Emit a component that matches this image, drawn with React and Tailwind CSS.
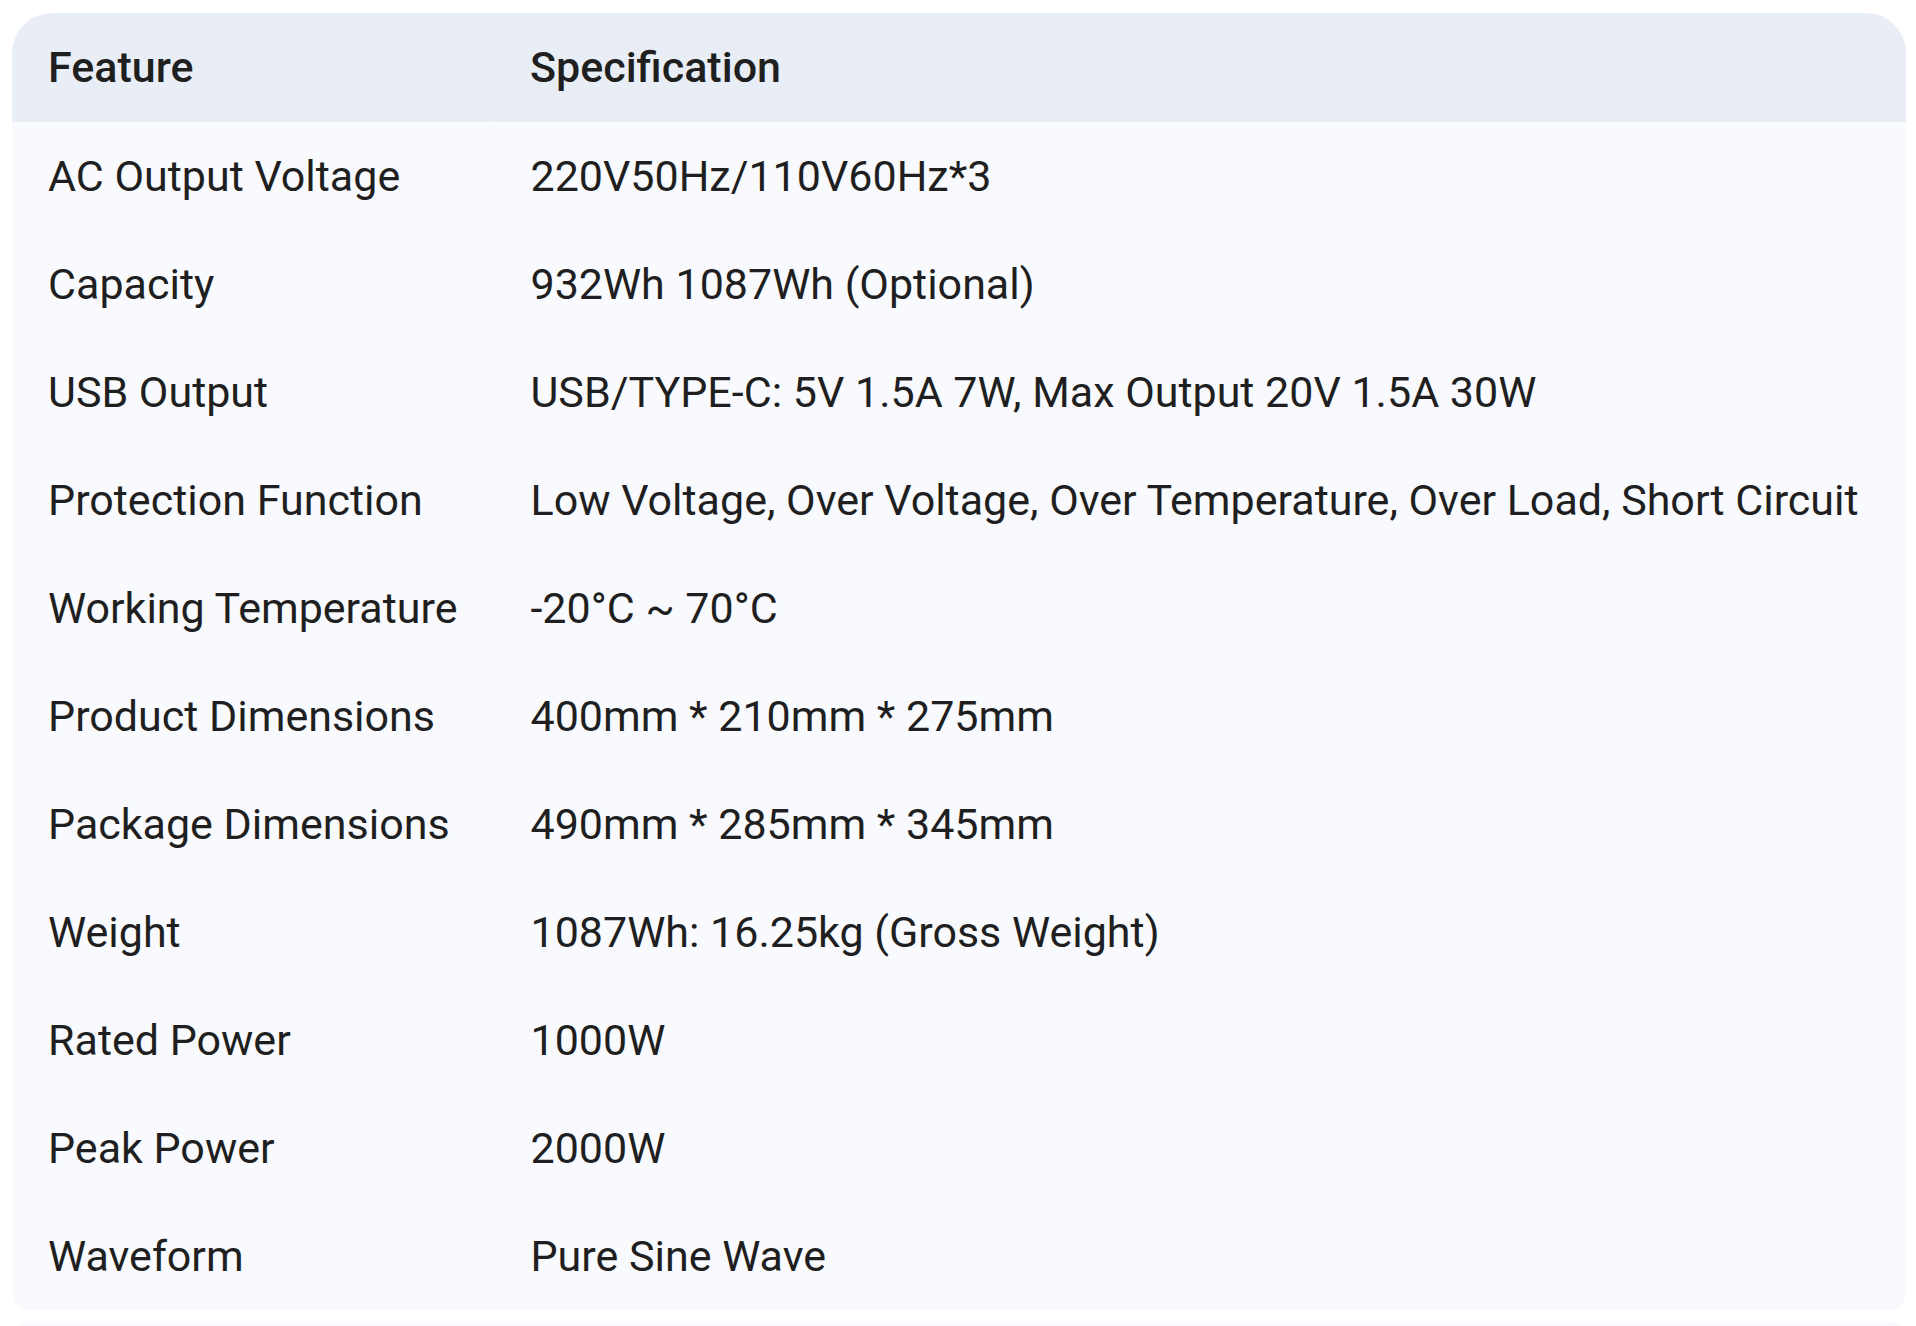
import React from 'react'

const specs = [
  ['AC Output Voltage', '220V50Hz/110V60Hz*3'],
  ['Capacity', '932Wh 1087Wh (Optional)'],
  ['USB Output', 'USB/TYPE-C: 5V 1.5A 7W, Max Output 20V 1.5A 30W'],
  ['Protection Function', 'Low Voltage, Over Voltage, Over Temperature, Over Load, Short Circuit'],
  ['Working Temperature', '-20°C ~ 70°C'],
  ['Product Dimensions', '400mm * 210mm * 275mm'],
  ['Package Dimensions', '490mm * 285mm * 345mm'],
  ['Weight', '1087Wh: 16.25kg (Gross Weight)'],
  ['Rated Power', '1000W'],
  ['Peak Power', '2000W'],
  ['Waveform', 'Pure Sine Wave'],
]

const App = () => {
  return (
    <div className="min-h-screen bg-white pl-[12px] pt-[13px] font-['Roboto',sans-serif] text-[#1f1f1f]">
      <div className="w-[1894px] overflow-hidden rounded-t-[40px] rounded-b-[16px] bg-[#f8fafd]">
        <table className="w-full border-collapse text-[43px] leading-none">
          <thead>
            <tr className="h-[109px] bg-[#e9eef6]">
              <th className="w-[480px] px-[36px] text-left font-medium whitespace-nowrap">Feature</th>
              <th className="px-[36px] text-left font-medium whitespace-nowrap">Specification</th>
            </tr>
          </thead>
          <tbody>
            {specs.map(([feature, value]) => (
              <tr key={feature} className="h-[108px]">
                <td className="w-[480px] px-[36px] whitespace-nowrap">{feature}</td>
                <td className="border-l border-[#f4f6fa] px-[36px] whitespace-nowrap">{value}</td>
              </tr>
            ))}
          </tbody>
        </table>
      </div>
      <div className="mt-[11px] h-[20px] w-[1892px] rounded-t-[16px] bg-[#f8fafd]"></div>
    </div>
  )
}

export default App
